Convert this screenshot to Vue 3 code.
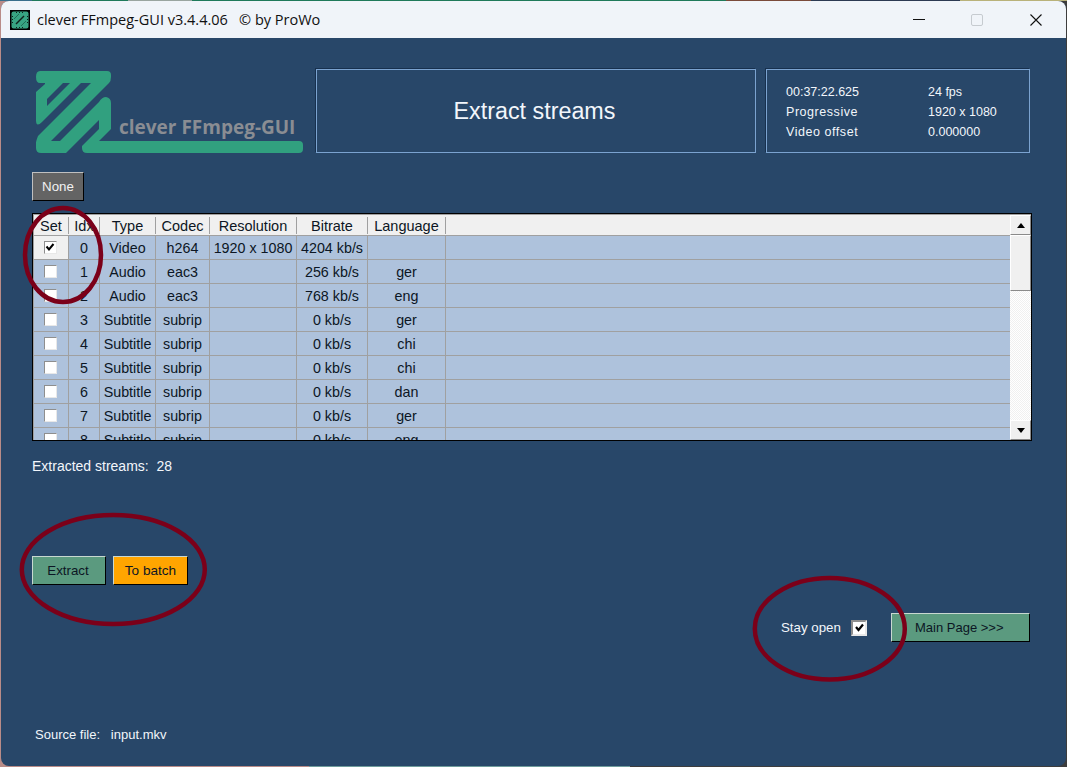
<script setup>
const columns = ['Set', 'Idx', 'Type', 'Codec', 'Resolution', 'Bitrate', 'Language', '']
const streams = [
  { idx: 0, type: 'Video', codec: 'h264', res: '1920 x 1080', rate: '4204 kb/s', lang: '', set: true },
  { idx: 1, type: 'Audio', codec: 'eac3', res: '', rate: '256 kb/s', lang: 'ger' },
  { idx: 2, type: 'Audio', codec: 'eac3', res: '', rate: '768 kb/s', lang: 'eng' },
  { idx: 3, type: 'Subtitle', codec: 'subrip', res: '', rate: '0 kb/s', lang: 'ger' },
  { idx: 4, type: 'Subtitle', codec: 'subrip', res: '', rate: '0 kb/s', lang: 'chi' },
  { idx: 5, type: 'Subtitle', codec: 'subrip', res: '', rate: '0 kb/s', lang: 'chi' },
  { idx: 6, type: 'Subtitle', codec: 'subrip', res: '', rate: '0 kb/s', lang: 'dan' },
  { idx: 7, type: 'Subtitle', codec: 'subrip', res: '', rate: '0 kb/s', lang: 'ger' },
  { idx: 8, type: 'Subtitle', codec: 'subrip', res: '', rate: '0 kb/s', lang: 'eng' }
]
</script>

<template>
  <div class="desktop">
    <div class="window">
      <header class="titlebar">
        <svg class="app-icon" width="20" height="20" viewBox="0 0 20 20">
          <rect width="20" height="20" fill="#000" />
          <rect x="1.5" y="1.5" width="17" height="17" rx="2" fill="#38a583" />
          <path d="M6 14 14 6" stroke="#10231d" stroke-width="1.4" />
          <path d="M4 9 9 4M11 16 16 11" stroke="#1f6f58" stroke-width="1" />
          <path d="M2.5 6v8M17.500 6v8M6 2.500h8M6 17.500h8" stroke="#10231d" stroke-width="1" stroke-dasharray="1 2" />
        </svg>
        <span class="title-text">clever FFmpeg-GUI v3.4.4.06&nbsp;&nbsp; © by ProWo</span>
        <div class="controls">
          <span class="ctl-min"></span>
          <span class="ctl-max"></span>
          <svg class="ctl-close" width="12" height="12" viewBox="0 0 12 12">
            <path d="M.5.5 11.500 11.500M11.500.5.5 11.500" stroke="#111" stroke-width="1.1" />
          </svg>
        </div>
      </header>

      <main class="content">
        <section class="top">
          <div class="logo">
            <svg width="272" height="84" viewBox="32 69 272 84">
              <path
                fill="#31a07f"
                fill-rule="evenodd"
                d="M40 71H107Q111 71 111 75V77Q111 81 109 83L51 141H60L99 102Q102 97 106 97Q111 98 111 103V129L99 141H299Q303 141 303 145V149Q303 153 299 153H87Q82 153 82 148V146L99 129V120L66 153H41Q36 153 36 148V143Q36 141 38 136L91 83H81L42 122Q36 128 36 120V92L45 84V83H40Q36 83 36 77Q36 71 40 71ZM47 106V99L63 83H70Z"
              />
            </svg>
            <span class="logo-text">clever FFmpeg-GUI</span>
          </div>
          <div class="panel title-panel">Extract streams</div>
          <div class="panel info-panel">
            <span>00:37:22.625</span><span>24 fps</span>
            <span class="wide">Progressive</span><span>1920 x 1080</span>
            <span class="wide">Video offset</span><span>0.000000</span>
          </div>
        </section>

        <button class="btn btn-none">None</button>

        <section class="table">
          <div class="table-body">
            <div class="head-row">
              <div v-for="c in columns" :key="c" class="head-cell">{{ c }}</div>
            </div>
            <div v-for="s in streams" :key="s.idx" class="row">
              <div class="cell cell-check" :class="{ 'cell-set': s.set }">
                <span class="check">
                  <svg v-if="s.set" width="10" height="10" viewBox="0 0 10 10">
                    <path d="M1.500 4.500 4 7.500 8.500 2" fill="none" stroke="#000" stroke-width="2" />
                  </svg>
                </span>
              </div>
              <div class="cell">{{ s.idx }}</div>
              <div class="cell">{{ s.type }}</div>
              <div class="cell">{{ s.codec }}</div>
              <div class="cell">{{ s.res }}</div>
              <div class="cell">{{ s.rate }}</div>
              <div class="cell">{{ s.lang }}</div>
              <div class="cell"></div>
            </div>
          </div>
          <div class="scrollbar">
            <div class="sb-btn"><span class="arrow-up"></span></div>
            <div class="sb-thumb"></div>
            <div class="sb-track"></div>
            <div class="sb-btn"><span class="arrow-down"></span></div>
          </div>
        </section>

        <p class="streams-count">Extracted streams:&nbsp;&nbsp;28</p>

        <div class="actions">
          <button class="btn btn-green btn-extract">Extract</button>
          <button class="btn btn-orange">To batch</button>
        </div>

        <div class="stay-row">
          <span class="stay-label">Stay open</span>
          <span class="check stay-check">
            <svg width="11" height="11" viewBox="0 0 11 11">
              <path d="M2 5 4.500 8 9 2.500" fill="none" stroke="#000" stroke-width="2.200" />
            </svg>
          </span>
          <button class="btn btn-green btn-main">Main Page &gt;&gt;&gt;</button>
        </div>

        <p class="source">Source file:&nbsp;&nbsp; input.mkv</p>
      </main>
    </div>

    <svg class="annotations" width="1067" height="767" viewBox="0 0 1067 767">
      <ellipse cx="63" cy="255" rx="38" ry="47" />
      <ellipse cx="113.300" cy="569.500" rx="91.500" ry="54.500" />
      <ellipse cx="829.800" cy="628.800" rx="75" ry="50.800" />
    </svg>
  </div>
</template>

<style>
html, body { margin: 0; overflow: hidden; }
</style>

<style scoped>
.desktop {
  position: relative;
  width: 1067px;
  height: 767px;
  padding: 1px;
  box-sizing: border-box;
  background:
    linear-gradient(90deg, #3a6f8c 0 3%, #1f7a5a 3% 12%, #9aa5a0 12% 18%, #1f7a5a 18% 68%, #7a4a3a 68% 76%, #2c3a52 76% 90%, #b9b27a 90% 100%) 0 0 / 100% 1px no-repeat,
    linear-gradient(90deg, #b98c88 0 29%, #6f9c9c 29% 59%, #3d3d3d 59% 100%);
  font-family: "Liberation Sans", Arial, sans-serif;
  font-size: 13px;
  overflow: hidden;
}
.window {
  height: 765px;
  display: flex;
  flex-direction: column;
  border-radius: 8px;
  overflow: hidden;
  background: #284769;
}
.titlebar {
  height: 37px;
  flex: none;
  display: flex;
  align-items: center;
  padding-left: 9px;
  background: #f0f4f9;
  color: #111;
}
.app-icon { margin-right: 7px; }
.title-text { font-family: "Open Sans", sans-serif; font-size: 14.500px; }
.controls {
  margin-left: auto;
  display: flex;
  align-items: center;
  padding-right: 24px;
}
.ctl-min { width: 12px; height: 1px; background: #111; margin-right: 46px; }
.ctl-max { width: 10px; height: 10px; border: 1px solid #c6cbd0; border-radius: 2px; margin-right: 47px; }
.ctl-close { display: block; }

.content {
  flex: 1;
  padding: 31px 0 0 31px;
  color: #f2f6fb;
}
.top { display: flex; height: 84px; }
.logo { position: relative; width: 284px; flex: none; }
.logo svg { display: block; }
.logo-text {
  position: absolute;
  left: 87px;
  top: 45px;
  font-family: "Open Sans", sans-serif;
  font-weight: 700;
  font-size: 19px;
  color: #8a8d93;
}
.panel {
  box-sizing: border-box;
  height: 84px;
  border: 1px solid #7ba3d0;
  box-shadow: -1px -1px 0 #17304e;
}
.title-panel {
  width: 440px;
  padding-right: 3px;
  display: flex;
  align-items: center;
  justify-content: center;
  font-size: 23.300px;
}
.info-panel {
  width: 264px;
  margin-left: 10px;
  padding: 12px 0 0 19px;
  display: grid;
  grid-template-columns: 142px 1fr;
  grid-auto-rows: 20px;
  line-height: 20px;
  font-size: 12.500px;
}
.wide { letter-spacing: 0.550px; }
.btn {
  display: block;
  box-sizing: border-box;
  padding: 0;
  height: 29px;
  font: inherit;
  font-size: 13.300px;
  border: 1px solid;
  border-color: #c8d8d0 #000 #000 #c8d8d0;
  color: #0c1624;
}
.btn-none {
  margin-top: 19px;
  width: 52px;
  background: #646464;
  color: #f2f2f2;
  border-color: #c0c0c0 #000 #000 #c0c0c0;
}

.table {
  box-sizing: border-box;
  margin-top: 12px;
  width: 1000px;
  height: 228px;
  border: 1px solid #000;
  padding: 1px 0 0 1px;
  background: #a0a0a0;
  display: flex;
  color: #0c1624;
  font-size: 14.300px;
}
.table-body { width: 976px; overflow: hidden; flex: none; }
.head-row, .row {
  display: grid;
  grid-template-columns: 35px 31px 56px 54px 87px 71px 78px 1fr;
  text-align: center;
}
.head-row {
  box-sizing: border-box;
  height: 21px;
  background: #f0f0f0;
  border-bottom: 1px solid #a0a0a0;
}
.head-cell {
  margin-top: 2px;
  height: 17px;
  line-height: 19px;
  font-size: 14.500px;
  border-right: 1px solid #a0a0a0;
}
.head-cell:last-child { border-right: 0; }
.row { height: 24px; background: #aec2dc; }
.cell {
  box-sizing: border-box;
  height: 24px;
  padding-top: 1px;
  border-right: 1px solid #a0a0a0;
  border-bottom: 1px solid #a0a0a0;
  white-space: nowrap;
  display: flex;
  align-items: center;
  justify-content: center;
}
.cell:last-child { border-right: 0; }
.cell-check { padding: 0 2px 1px 0; }
.cell-set { background: #f0f0f0; }
.check {
  box-sizing: border-box;
  width: 13px;
  height: 13px;
  background: #fff;
  border: 1px solid;
  border-color: #8e8e8e #e8e8e8 #e8e8e8 #8e8e8e;
  display: flex;
  align-items: center;
  justify-content: center;
}
.scrollbar {
  width: 21px;
  flex: none;
  display: flex;
  flex-direction: column;
  background: #fff;
}
.sb-btn {
  height: 20px;
  flex: none;
  box-sizing: border-box;
  background: #f0f0f0;
  border: 1px solid;
  border-color: #fff #8a8a8a #8a8a8a #fff;
  display: flex;
  align-items: center;
  justify-content: center;
}
.arrow-up { border: 4.500px solid transparent; border-top: 0; border-bottom: 5px solid #000; }
.arrow-down { border: 4.500px solid transparent; border-bottom: 0; border-top: 5px solid #000; }
.sb-thumb {
  height: 56px;
  flex: none;
  box-sizing: border-box;
  background: #f0f0f0;
  border: 1px solid;
  border-color: #fff #8a8a8a #8a8a8a #fff;
}
.sb-track {
  flex: 1;
  background: repeating-conic-gradient(#f0f0f0 0 25%, #fff 0 50%) 0 0 / 2px 2px;
}

.streams-count {
  margin: 17px 0 0 0;
  line-height: 16px;
  font-size: 14px;
}
.actions {
  display: flex;
  gap: 7px;
  margin-top: 82px;
}
.btn-green { background: #5b9a7f; }
.btn-extract { width: 74px; padding-right: 2px; }
.btn-orange { width: 75px; background: #ffa500; font-size: 13.600px; }
.stay-row {
  display: flex;
  align-items: center;
  margin-top: 28px;
  height: 29px;
}
.stay-label { margin-left: 749px; width: 70px; font-size: 13.300px; }
.stay-check { width: 16px; height: 16px; border-width: 2px; }
.btn-main {
  width: 139px;
  margin-left: 24px;
  text-align: left;
  padding-left: 23px;
  font-size: 13px;
}
.source { margin: 85px 0 0 3px; line-height: 16px; }

.annotations {
  position: absolute;
  left: 0;
  top: 0;
  pointer-events: none;
}
.annotations ellipse {
  fill: none;
  stroke: #7b0019;
  stroke-width: 4.500;
}
</style>
